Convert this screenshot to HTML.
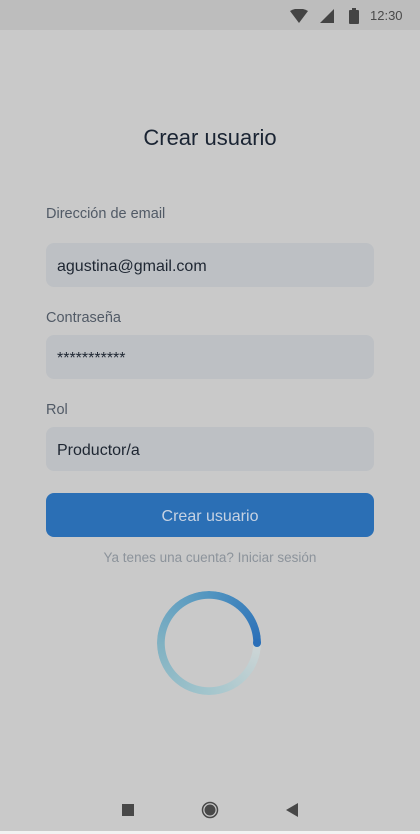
<!DOCTYPE html>
<html><head><style>
*{margin:0;padding:0;box-sizing:border-box}
body{width:420px;height:834px;background:#c9c9c9;font-family:"Liberation Sans",sans-serif;position:relative;overflow:hidden}
.sb{position:absolute;left:0;top:0;width:420px;height:30px;background:#bdbdbd}
.t{position:absolute;left:370px;top:8px;font-size:13px;color:#4a4a4a}
.title{position:absolute;top:125px;width:420px;text-align:center;font-size:22px;color:#1a2433}
.lbl{position:absolute;left:46px;font-size:14.5px;color:#515a66}
.in{position:absolute;left:46px;width:328px;height:44px;border-radius:8px;background:#bdc0c4;font-size:16px;color:#1e2632;padding:15px 11px 0;line-height:18px}
.btn{position:absolute;left:46px;top:493px;width:328px;height:44px;border-radius:8px;background:#2b6fb5;color:#c6d2e2;font-size:16px;text-align:center;line-height:47px}
.link{position:absolute;top:550px;width:420px;text-align:center;font-size:13.5px;color:#8c939b}
.sp{position:absolute;left:157px;top:591px;width:104px;height:104px;border-radius:50%;
background:conic-gradient(from 90deg,#cfd6d6 0deg,#a3c5cc 90deg,#80b1c2 180deg,#5295c0 270deg,#2a6fb8 360deg);
-webkit-mask:radial-gradient(circle,transparent 44px,#000 44.5px,#000 52px,transparent 52.5px);
mask:radial-gradient(circle,transparent 44px,#000 44.5px,#000 52px,transparent 52.5px)}
.cap{position:absolute;left:253px;top:639px;width:8px;height:8px;border-radius:50%;background:#2a6fb8}
</style></head><body>
<div class="sb">
<svg style="position:absolute;left:290px;top:9px" width="18" height="14"><path d="M0 2 Q9 -3 18 2 L9 14Z" fill="#444"/></svg>
<svg style="position:absolute;left:320px;top:9px" width="14" height="14"><path d="M0 14 L14 0 L14 14Z" fill="#444"/></svg>
<svg style="position:absolute;left:349px;top:8px" width="10" height="16"><rect x="3" y="0" width="4" height="2" fill="#444"/><rect x="0" y="2" width="10" height="14" rx="1" fill="#444"/></svg>
<div class="t">12:30</div>
</div>
<div class="title">Crear usuario</div>
<div class="lbl" style="top:206px">Dirección de email</div>
<div class="in" style="top:243px">agustina@gmail.com</div>
<div class="lbl" style="top:310px">Contraseña</div>
<div class="in" style="top:335px">***********</div>
<div class="lbl" style="top:402px">Rol</div>
<div class="in" style="top:427px">Productor/a</div>
<div class="btn">Crear usuario</div>
<div class="link">Ya tenes una cuenta? Iniciar sesión</div>
<div class="sp"></div><div class="cap"></div>
<svg style="position:absolute;left:0;top:795px" width="420" height="30">
<rect x="122" y="9" width="12" height="12" fill="#484848"/>
<circle cx="210" cy="15" r="7.5" fill="none" stroke="#484848" stroke-width="1.5"/><circle cx="210" cy="15" r="5.5" fill="#484848"/>
<path d="M286 15 L298 8 L298 22Z" fill="#484848"/>
</svg>
<div style="position:absolute;left:0;top:831px;width:420px;height:3px;background:#f2f2f2"></div>
</body></html>
